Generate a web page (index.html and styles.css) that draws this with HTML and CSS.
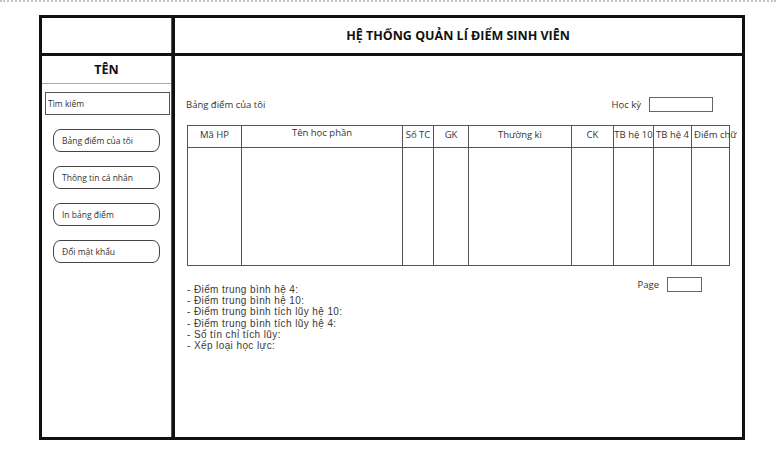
FILE: index.html
```html
<!DOCTYPE html>
<html lang="vi">
<head>
    <meta charset="UTF-8">
    <meta name="viewport" content="width=device-width, initial-scale=1.0">
    <title>Hệ thống quản lí điểm sinh viên</title>
    <link rel="stylesheet" href="styles.css">
</head>
<body>

    <div class="frame">
        <!-- Header -->
        <div class="head-left"></div>
        <div class="head-title">HỆ THỐNG QUẢN LÍ ĐIỂM SINH VIÊN</div>

        <!-- Sidebar -->
        <div class="side">
            <div class="side-title">TÊN</div>
            <div class="search">Tìm kiếm</div>
            <div class="menu">
                <div class="menu-item">Bảng điểm của tôi</div>
                <div class="menu-item">Thông tin cá nhân</div>
                <div class="menu-item">In bảng điểm</div>
                <div class="menu-item">Đổi mật khẩu</div>
            </div>
        </div>

        <!-- Noi dung chinh -->
        <div class="main">
            <div class="top-row">
                <div>Bảng điểm của tôi</div>
                <div class="field">Học kỳ <span class="box box-term"></span></div>
            </div>

            <table class="grades">
                <colgroup>
                    <col style="width: 54px">
                    <col style="width: 161px">
                    <col style="width: 31px">
                    <col style="width: 35px">
                    <col style="width: 103px">
                    <col style="width: 42px">
                    <col style="width: 40px">
                    <col style="width: 38px">
                    <col style="width: 38px">
                </colgroup>
                <tr class="grades-head">
                    <th>Mã HP</th>
                    <th class="up">Tên học phần</th>
                    <th>Số TC</th>
                    <th>GK</th>
                    <th>Thường kì</th>
                    <th>CK</th>
                    <th>TB hệ 10</th>
                    <th>TB hệ 4</th>
                    <th class="over">Điểm chữ</th>
                </tr>
                <tr class="grades-body">
                    <td></td><td></td><td></td><td></td><td></td><td></td><td></td><td></td><td></td>
                </tr>
            </table>

            <div class="bottom">
                <ul class="stats">
                    <li>- Điểm trung bình hệ 4:</li>
                    <li>- Điểm trung bình hệ 10:</li>
                    <li>- Điểm trung bình tích lũy hệ 10:</li>
                    <li>- Điểm trung bình tích lũy hệ 4:</li>
                    <li>- Số tín chỉ tích lũy:</li>
                    <li>- Xếp loại học lực:</li>
                </ul>
                <div class="field">Page <span class="box box-page"></span></div>
            </div>
        </div>
    </div>

</body>
</html>
```

FILE: styles.css
```css
body {
    margin: 0;
    font-family: "Open Sans", "Noto Sans", sans-serif;
    color: #333;
    background: #fff;
    border-top: 2px dotted #c4c4c4;
    height: 448px;
}
.frame {
    margin: 13px 0 0 39px;
    width: 700px;
    height: 419px;
    border: 3px solid #111;
    display: grid;
    grid-template-columns: 130px 567px;
    grid-template-rows: 35px 381px;
    column-gap: 3px;
    row-gap: 3px;
    background: #111;
}
.head-left,
.head-title,
.side,
.main {
    background: #fff;
}
.head-left,
.side {
    border-right: 1px solid #555;
}
.head-title {
    display: flex;
    align-items: center;
    justify-content: center;
    font-size: 12.5px;
    font-weight: bold;
    color: #111;
    padding-right: 1px;
}
.side {
    display: flex;
    flex-direction: column;
}
.side-title {
    height: 27px;
    border-bottom: 1px solid #aaa;
    display: flex;
    align-items: center;
    justify-content: center;
    font-size: 12.5px;
    font-weight: bold;
    color: #111;
}
.search {
    margin: 8px 1px 0 3px;
    height: 21px;
    border: 1px solid #555;
    font-size: 8.5px;
    line-height: 21px;
    padding-left: 2px;
}
.menu {
    display: flex;
    flex-direction: column;
    gap: 14px;
    margin: 14px 0 0 11px;
}
.menu-item {
    width: 97px;
    height: 21px;
    border: 1px solid #444;
    border-radius: 7px / 9px;
    font-size: 8.5px;
    line-height: 21px;
    padding-left: 8px;
}
.main {
    padding: 41px 0 0 11px;
    font-size: 9.5px;
}
.top-row {
    display: flex;
    justify-content: space-between;
    align-items: center;
    width: 527px;
    height: 15px;
}
.field {
    display: flex;
    align-items: center;
    gap: 8px;
}
.box {
    display: inline-block;
    border: 1px solid #666;
    height: 13px;
}
.box-term {
    width: 62px;
}
.box-page {
    width: 33px;
}
.grades {
    margin: 13px 0 0 1px;
    border-collapse: collapse;
    table-layout: fixed;
    width: 542px;
}
.grades th,
.grades td {
    border: 1px solid #555;
    padding: 0;
}
.grades-head th {
    height: 19px;
    font-weight: normal;
    font-size: 9.5px;
    vertical-align: top;
    padding-top: 2px;
    white-space: nowrap;
}
.grades-head th.up {
    padding-top: 0;
}
.grades-head th.over {
    overflow: visible;
    text-align: left;
    padding-left: 2px;
}
.grades-body td {
    height: 117px;
}
.bottom {
    display: flex;
    justify-content: space-between;
    align-items: flex-start;
    width: 516px;
    margin-top: 11px;
}
.stats {
    list-style: none;
    margin: 7px 0 0 1px;
    padding: 0;
    font-family: "Liberation Sans", Arial, sans-serif;
    font-size: 10px;
    line-height: 11.2px;
    letter-spacing: 0.4px;
    color: #3a3a3a;
}
```
